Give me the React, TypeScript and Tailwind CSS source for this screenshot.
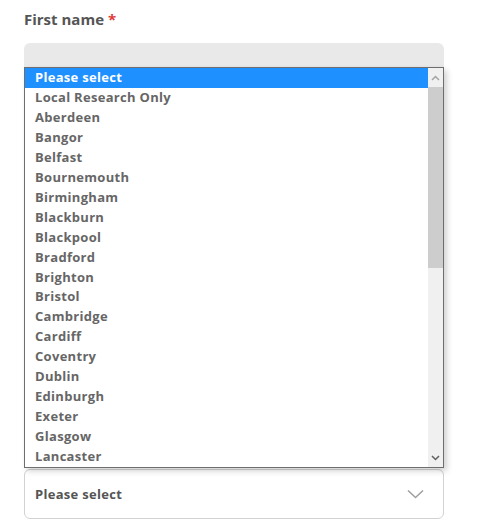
import React from "react";

const items = [
  "Please select",
  "Local Research Only",
  "Aberdeen",
  "Bangor",
  "Belfast",
  "Bournemouth",
  "Birmingham",
  "Blackburn",
  "Blackpool",
  "Bradford",
  "Brighton",
  "Bristol",
  "Cambridge",
  "Cardiff",
  "Coventry",
  "Dublin",
  "Edinburgh",
  "Exeter",
  "Glasgow",
  "Lancaster",
];

export default function App() {
  return (
    <div
      className="relative w-[483px] h-[522px] bg-white overflow-hidden"
      style={{ fontFamily: "'Open Sans', 'Noto Sans', sans-serif" }}
    >
      <div className="pl-[24px] pr-[39px] pt-[8px]">
        <div className="text-[15px] font-bold text-[#555] leading-[22px]">
          First name <span className="text-[#e03a3a]">*</span>
        </div>
        <div className="mt-[13px] h-[46px] rounded-t-[6px] bg-[#e9e9e9] pl-[10px] pt-[20px] text-[13px] font-bold text-[#555]">
          Joe Bloggs
        </div>
        <div className="h-[380px]" />
        <div className="h-[50px] rounded-[6px] border border-[#d2d2d2] flex items-center justify-between pl-[10px] pr-[19px]">
          <span className="text-[13px] font-bold text-[#555] tracking-[0.3px] pt-[1px]">Please select</span>
          <svg width="17" height="10" viewBox="0 0 17 10" fill="none">
            <path d="M1 1.5 L8.5 8.5 L16 1.5" stroke="#a0a0a0" strokeWidth="1.6" />
          </svg>
        </div>
      </div>

      <div className="absolute left-[24px] top-[67px] w-[420px] h-[401px] bg-white border border-[#6e6e6e] shadow-[3px_3px_6px_rgba(0,0,0,0.18)] flex">
        <div className="flex-1 flex flex-col">
          {items.map((it, i) => (
            <div
              key={it}
              className={
                i === 0
                  ? "h-[20px] leading-[19px] pl-[10px] text-[13px] font-bold tracking-[0.3px] text-white bg-[#1e90ff]"
                  : "h-[20px] leading-[19px] pl-[10px] text-[13px] font-bold tracking-[0.3px] text-[#666]"
              }
            >
              {it}
            </div>
          ))}
        </div>
        <div className="w-[15px] bg-[#f0f0f0] flex flex-col">
          <div className="h-[19px] flex items-center justify-center">
            <svg width="9" height="6" viewBox="0 0 9 6">
              <path d="M1 5 L4.5 1.5 L8 5" stroke="#a3a3a3" strokeWidth="1.5" fill="none" />
            </svg>
          </div>
          <div className="h-[181px] bg-[#cdcdcd]" />
          <div className="flex-1" />
          <div className="h-[19px] flex items-center justify-center">
            <svg width="9" height="6" viewBox="0 0 9 6">
              <path d="M1 1 L4.5 4.5 L8 1" stroke="#5f5f5f" strokeWidth="1.5" fill="none" />
            </svg>
          </div>
        </div>
      </div>
    </div>
  );
}
